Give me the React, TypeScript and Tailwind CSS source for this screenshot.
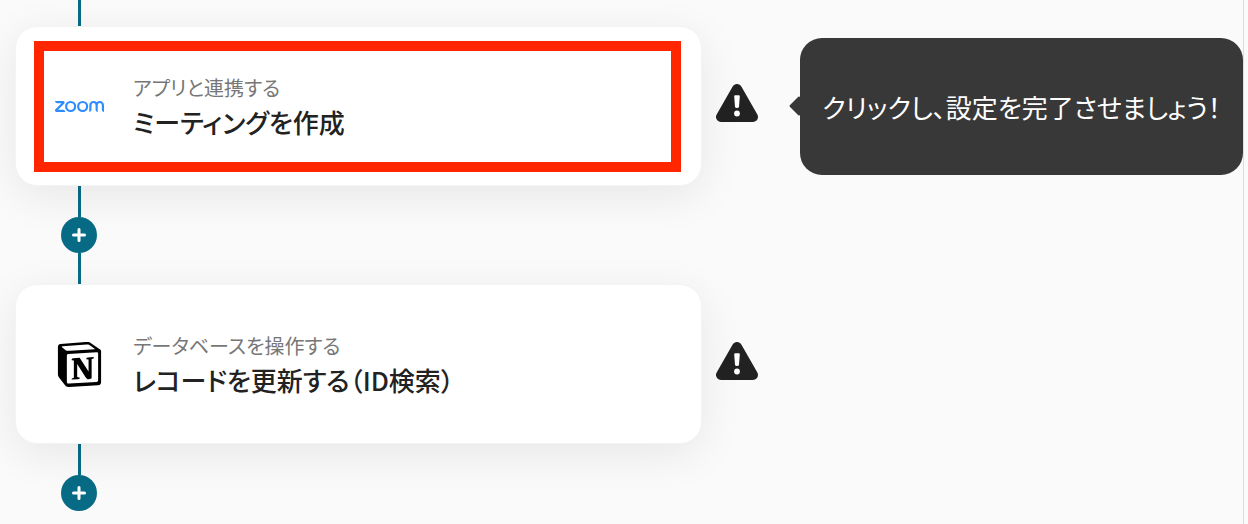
import { type ReactNode } from "react";
import { SiNotion, SiZoom } from "react-icons/si";

interface Step {
  id: string;
  kind: string;
  title: string;
  icon: ReactNode;
  highlighted?: boolean;
  hint?: string;
}

const steps: Step[] = [
  {
    id: "create-meeting",
    kind: "アプリと連携する",
    title: "ミーティングを作成",
    icon: <SiZoom className="size-[49px] text-[#2d8cff]" aria-hidden />,
    highlighted: true,
    hint: "クリックし、設定を完了させましょう！",
  },
  {
    id: "update-record",
    kind: "データベースを操作する",
    title: "レコードを更新する（ID検索）",
    icon: <SiNotion className="size-[45px] text-black" aria-hidden />,
  },
];

const WarningIcon = () => (
  <svg viewBox="0 0 42 38" className="w-[42px] h-[38px]" role="img">
    <path
      d="M21 5 L5 33 H37 Z"
      fill="#222"
      stroke="#222"
      strokeWidth="10"
      strokeLinejoin="round"
    />
    <path
      d="M19.3 11.3 h3.4 q1.2 0 1.1 1.2 l-.8 10.2 q-.1 1.3 -2 1.3 t-2 -1.3 l-.8 -10.2 q-.1 -1.2 1.1 -1.2 Z"
      fill="#fff"
    />
    <circle cx="21" cy="29.5" r="2.9" fill="#fff" />
  </svg>
);

const Connector = () => (
  <div className="ml-[46px] flex w-9 flex-col items-center">
    <div className="h-[31px] w-[3px] bg-[#086b85]" />
    <button
      type="button"
      aria-label="+"
      className="flex size-9 items-center justify-center rounded-full bg-[#086b85]"
    >
      <svg viewBox="0 0 14 14" className="size-[14px]">
        <path
          d="M7 1.5 V12.5 M1.5 7 H12.5"
          stroke="#fff"
          strokeWidth="3"
          strokeLinecap="round"
        />
      </svg>
    </button>
  </div>
);

const StepCard: React.FC<{ step: Step }> = ({ step }) => {
  return (
    <button
      type="button"
      className="relative flex h-40 w-full items-center rounded-[22px] border border-[#f4f4f4] bg-white pl-[33px] text-left shadow-[0_10px_44px_rgba(0,0,0,0.08)]"
    >
      <span className="flex w-[60px] justify-center">{step.icon}</span>
      <span className="ml-6 flex flex-col">
        <span className="text-xl leading-8 text-[#777]">{step.kind}</span>
        <span className="text-[26px] leading-9 font-medium text-[#222]">
          {step.title}
        </span>
      </span>
      {step.highlighted && (
        <span className="absolute top-[14px] right-5 bottom-[13px] left-[18px] border-10 border-[#ff2600]" />
      )}
    </button>
  );
};

const Hint: React.FC<{ text: string }> = ({ text }) => {
  return (
    <div
      role="tooltip"
      className="relative flex h-[137px] items-center justify-center rounded-[22px] bg-[#383838] text-[26px] whitespace-nowrap text-white"
    >
      <span className="absolute top-[61px] -left-2 size-[14px] rotate-45 rounded-[1px] bg-[#383838]" />
      {text}
    </div>
  );
};

const App = () => {
  return (
    <div className="min-h-screen bg-[#fafafa] pr-1">
      <main
        lang="ja"
        className="min-h-screen border-r border-[#ddd] pl-[15px] font-['Noto_Sans_CJK_JP',sans-serif] [font-feature-settings:'palt']"
      >
        <div className="ml-[63px] h-[26px] w-[3px] bg-[#086b85]" />
        {steps.map((step, index) => (
          <div key={step.id}>
            {index > 0 && (
              <div className="ml-[63px] h-[31px] w-[3px] bg-[#086b85]" />
            )}
            <section className="grid grid-cols-[minmax(0,1fr)_98px_443px] items-center">
              <StepCard step={step} />
              <div className="pb-1.5 pl-[14px]">
                <WarningIcon />
              </div>
              {step.hint && <Hint text={step.hint} />}
            </section>
            <Connector />
          </div>
        ))}
      </main>
    </div>
  );
};

export default App;
